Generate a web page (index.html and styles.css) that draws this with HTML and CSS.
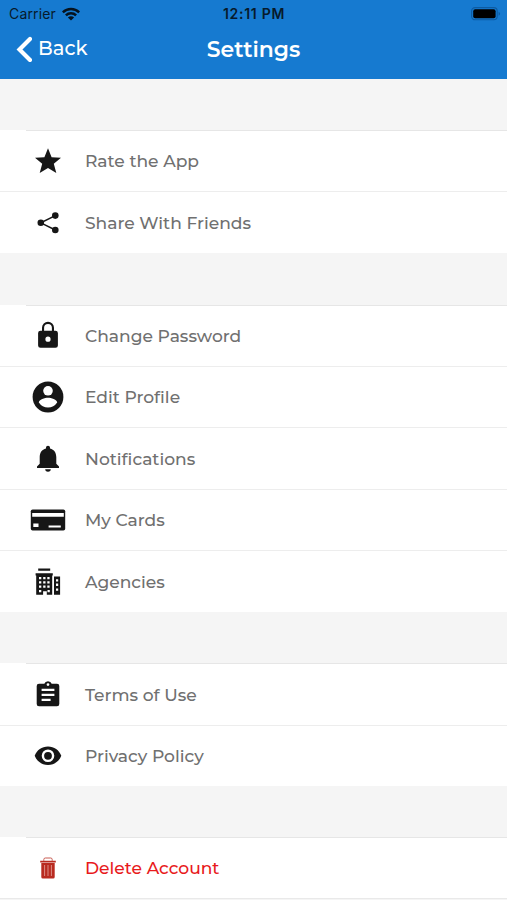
FILE: index.html
```html
<!DOCTYPE html>
<html lang="en">
<head>
<meta charset="utf-8">
<title>Settings</title>
<link rel="stylesheet" href="styles.css">
</head>
<body>
<header class="header">
  <div class="status">
    <div class="carrier"><span>Carrier</span>
      <svg class="wifi" viewBox="0 0 18 14"><path d="M0 4.4a12.8 12.8 0 0 1 18 0l-1.7 1.8a10.3 10.3 0 0 0-14.6 0zM3 7.5a8.5 8.5 0 0 1 12 0l-1.8 1.8a6 6 0 0 0-8.4 0zM5.9 10.5a4.4 4.4 0 0 1 6.2 0L9 13.6z"/></svg>
    </div>
    <div class="time">12:11 PM</div>
    <div class="power"><svg class="battery" viewBox="0 0 30 14"><rect x=".6" y=".6" width="25.6" height="12.2" rx="3.5" fill="none" stroke="#0d5ba2" stroke-width="1.1"/><rect x="2.2" y="2.2" width="22.4" height="9" rx="2"/><path d="M27.6 4.7q3 2 0 4z" fill="#0d5ba2"/></svg></div>
  </div>
  <nav class="nav">
    <a class="back"><svg class="chevron" viewBox="0 0 16 26"><path d="M14 3 3.500 13.500 14 24" fill="none" stroke="#fff" stroke-width="4.200" stroke-linecap="round"/></svg><span>Back</span></a>
    <h1 class="title">Settings</h1>
  </nav>
</header>
<main>
  <section class="group first">
    <div class="row"><svg class="icon" viewBox="0 0 36 36"><path d="m18 5.300 3.600 8.900 9.400.6-7.200 6 2.500 9.200L18 25.100l-8.300 4.900 2.500-9.200-7.200-6 9.400-.6z"/></svg><span class="label">Rate the App</span></div>
    <div class="row"><svg class="icon" viewBox="0 0 36 36"><path d="M25.300 10.600 10.800 17.800l14.500 7.200" fill="none" stroke="#161616" stroke-width="1.500"/><circle cx="25.300" cy="10.600" r="3.300"/><circle cx="10.800" cy="17.800" r="3.300"/><circle cx="25.300" cy="25" r="3.300"/></svg><span class="label">Share With Friends</span></div>
  </section>
  <section class="group second">
    <div class="row"><svg class="icon" viewBox="0 0 36 36"><path d="M25.500 13.700H24v-2.900a6 6 0 0 0-12 0v2.900h-1.500A2.400 2.400 0 0 0 8.100 16v12.400a2.400 2.400 0 0 0 2.400 2.400h15a2.400 2.400 0 0 0 2.400-2.400V16a2.400 2.400 0 0 0-2.400-2.300zM18 24.800a2.600 2.600 0 1 1 0-5.200 2.600 2.600 0 0 1 0 5.200zm-3.900-11.100v-2.900a3.900 3.900 0 0 1 7.800 0v2.900z"/></svg><span class="label">Change Password</span></div>
    <div class="row"><svg class="icon" viewBox="0 0 36 36"><circle cx="18" cy="18" r="15.400"/><circle cx="18" cy="11.800" r="4.800" fill="#fff"/><path d="M8.800 23.600c0-3.200 6.200-4.800 9.200-4.800s9.200 1.600 9.200 4.800a11 11 0 0 1-18.400 0z" fill="#fff"/></svg><span class="label">Edit Profile</span></div>
    <div class="row"><svg class="icon" viewBox="0 0 36 36"><path d="M18 4.800c-1.200 0-2 .8-2 2v.7c-4.200 1-6.300 4.300-6.300 8.800v6.400L7 25.400V27h22v-1.600l-2.700-2.700v-6.400c0-4.500-2.100-7.800-6.300-8.800v-.7c0-1.200-.8-2-2-2zM15.200 28.200a2.800 2.500 0 0 0 5.600 0z"/></svg><span class="label">Notifications</span></div>
    <div class="row"><svg class="icon" viewBox="0 0 36 36"><rect x=".8" y="7.400" width="34.400" height="21.200" rx="1.800"/><path d="M2.200 11.100h31.600v3.600H2.200zM3.300 21.500h5.200v3.500H3.300zM18.600 23.500h12.200v2H18.600z" fill="#fff"/></svg><span class="label">My Cards</span></div>
    <div class="row"><svg class="icon" viewBox="0 0 36 36"><path d="M8.200 4.500h12v2.200h-12zM5.600 9.200h17.200v2.200h-.6v19.400h-5.400v-3.600h-3.700v3.600H6.200V11.400h-.6zM24 12.400h6.100v18.400H24z"/><path d="M9 13h2.300v2.200H9zm4.200 0h2.300v2.200h-2.300zm4.100 0h2.300v2.200h-2.300zM9 17.300h2.300v2.200H9zm4.200 0h2.300v2.200h-2.300zm4.100 0h2.300v2.200h-2.300zM9 21.600h2.300v2.200H9zm4.200 0h2.300v2.200h-2.300zm4.100 0h2.300v2.200h-2.300zM9 26h2.300v2.200H9zm8.500 0h2.300v2.200h-2.300zM26 15.200h2.200v2.300H26zm0 4.400h2.200v2.300H26zm0 4.800h2.200v2.300H26z" fill="#fff"/></svg><span class="label">Agencies</span></div>
  </section>
  <section class="group">
    <div class="row"><svg class="icon" viewBox="0 0 36 36"><path fill-rule="evenodd" d="M27 7.800h-5.300a3.900 3.900 0 0 0-7.400 0H9a2.300 2.300 0 0 0-2.300 2.300v17.800A2.300 2.300 0 0 0 9 30.200h18a2.300 2.300 0 0 0 2.300-2.300V10.100A2.300 2.300 0 0 0 27 7.800zm-9-.6a1.400 1.400 0 1 1 0 2.800 1.400 1.400 0 0 1 0-2.800zM11.600 12.800h12.800v2.300H11.600zm0 4.900h12.800V20H11.600zm0 5h9V25h-9z"/></svg><span class="label">Terms of Use</span></div>
    <div class="row"><svg class="icon" viewBox="0 0 36 36"><path fill-rule="evenodd" d="M18 8.600c-6.200 0-11.200 3.600-13.300 9.200 2.100 5.600 7.100 9.200 13.300 9.200s11.200-3.600 13.300-9.200C29.200 12.200 24.200 8.600 18 8.600zM18 24.100a6.300 6.300 0 1 1 0-12.600 6.300 6.300 0 0 1 0 12.600zm0-2.400a3.900 3.900 0 1 0 0-7.800 3.900 3.900 0 0 0 0 7.800z"/></svg><span class="label">Privacy Policy</span></div>
  </section>
  <section class="group">
    <div class="row danger"><svg class="icon" viewBox="0 0 36 36"><path d="M13.800 10.800V9.500q0-1.500 1.500-1.500h5.400q1.500 0 1.500 1.500v1.300" fill="none" stroke="#c85a50" stroke-width="1"/><path d="M10.200 10.800h15.600v1.800H10.200zM11.300 13h13.400v14q0 1.600-1.600 1.600H12.900q-1.600 0-1.600-1.600z" fill="#b92b20"/><path d="M14.600 15v11M18 15v11M21.400 15v11" stroke="#e5a49e" stroke-width=".8"/></svg><span class="label">Delete Account</span></div>
  </section>
</main>
</body>
</html>
```
FILE: styles.css
```css
* { box-sizing: border-box; }
html, body { height: 100%; }
body {
  margin: 0;
  overflow: hidden;
  background: #f5f5f5;
  color: #707070;
  font-family: Montserrat, Inter, "Liberation Sans", sans-serif;
}
.header { height: 79px; background: #167ad0; }
.status {
  display: grid;
  grid-template-columns: 1fr auto 1fr;
  align-items: center;
  height: 27px;
  padding: 0 6px 0 9px;
  color: #071a2c;
  font-family: Inter, sans-serif;
  font-size: 14px;
}
.carrier { display: flex; align-items: center; gap: 6px; letter-spacing: .15px; }
.wifi { width: 18px; height: 14px; fill: #06131f; }
.time { margin-right: 2px; font-weight: 600; letter-spacing: .7px; }
.power { display: flex; justify-content: flex-end; }
.battery { width: 30px; height: 14px; }
.nav {
  display: grid;
  grid-template-columns: 1fr auto 1fr;
  align-items: center;
  height: 43px;
  padding: 0 16px;
  color: #fff;
}
.back { display: flex; align-items: center; gap: 6px; font-size: 19.5px; font-weight: 500; line-height: 24px; }
.back span { padding-bottom: 1px; }
.chevron { width: 16px; height: 26px; }
.title { margin: 0; font-size: 21.9px; font-weight: 600; }
.group { padding-top: 51.4px; }
.first { padding-top: 51px; }
.second { padding-top: 51.8px; }
.row {
  display: flex;
  align-items: center;
  gap: 19px;
  height: 61.43px;
  padding-left: 30px;
  background: #fff;
  border-top: 1px solid #ededed;
}
.row:first-child {
  border-top: 0;
  background: linear-gradient(#e6e6e6, #e6e6e6) 26px 0 / 100% 1px no-repeat #fff;
}
.icon { width: 36px; height: 36px; fill: #161616; }
.label {
  font-size: 17.1px;
  font-weight: 500;
  font-variant-ligatures: none;
  line-height: 24px;
  white-space: nowrap;
}
.row:first-child .label { padding-top: 1.4px; }
.danger { color: #e81a1c; border-bottom: 1px solid #e9e9e9; }
```
